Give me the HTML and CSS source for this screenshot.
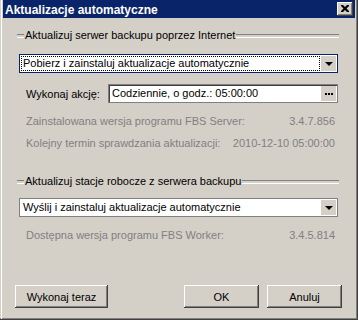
FILE: index.html
```html
<!DOCTYPE html>
<html lang="pl">
<head>
<meta charset="utf-8">
<title>Aktualizacje automatyczne</title>
<link rel="stylesheet" href="styles.css">
</head>
<body>
<div class="window">
  <div class="titlebar">
    <span class="title">Aktualizacje automatyczne</span>
    <span class="close-btn">
      <svg width="8" height="7" viewBox="0 0 8 7"><path d="M0 0h2l2 2 2-2h2v1L5.5 3.5 8 6v1H6L4 5 2 7H0V6l2.5-2.5L0 1z" fill="#000"/></svg>
    </span>
  </div>
  <div class="content">
    <div class="legend legend-first"><span class="legend-text">Aktualizuj serwer backupu poprzez Internet</span></div>
    <div class="combo combo-focus">
      <div class="combo-value"><span class="focus-rect">Pobierz i zainstaluj aktualizacje automatycznie</span></div>
      <div class="combo-btn"><span class="arrow"></span></div>
    </div>
    <div class="action-row">
      <span class="label">Wykonaj akcję:</span>
      <div class="edit">
        <span class="edit-text">Codziennie, o godz.: 05:00:00</span>
        <span class="dots-btn"><svg width="8" height="2" viewBox="0 0 8 2"><rect x="0" y="0" width="2" height="2"/><rect x="3" y="0" width="2" height="2"/><rect x="6" y="0" width="2" height="2"/></svg></span>
      </div>
    </div>
    <div class="info info-first"><span>Zainstalowana wersja programu FBS Server:</span><span>3.4.7.856</span></div>
    <div class="info"><span>Kolejny termin sprawdzania aktualizacji:</span><span>2010-12-10 05:00:00</span></div>
    <div class="legend legend-second"><span class="legend-text">Aktualizuj stacje robocze z serwera backupu</span></div>
    <div class="combo combo-plain">
      <div class="combo-value"><span class="plain-text">Wyślij i zainstaluj aktualizacje automatycznie</span></div>
      <div class="combo-btn"><span class="arrow"></span></div>
    </div>
    <div class="info info-third"><span>Dostępna wersja programu FBS Worker:</span><span>3.4.5.814</span></div>
  </div>
  <div class="buttons">
    <button class="btn btn-wide">Wykonaj teraz</button>
    <span class="spacer"></span>
    <button class="btn">OK</button>
    <button class="btn">Anuluj</button>
  </div>
</div>
</body>
</html>
```

FILE: styles.css
```css
* { box-sizing: border-box; }
html, body { margin: 0; padding: 0; background: #d4d0c8; }
body {
  font-family: "Liberation Sans", Arial, sans-serif;
  font-size: 11px;
  color: #000;
}
.window {
  width: 358px;
  height: 320px;
  background: #d4d0c8;
  padding: 0 3px;
  box-shadow: inset -1px -1px #404040, inset -2px -2px #808080, inset 2px 0 #d4d0c8, inset 1px 0 #d4d0c8;
  position: relative;
  display: flex;
  flex-direction: column;
}
.window::before {
  content: "";
  position: absolute;
  left: 1px; top: 0; bottom: 1px;
  width: 1px;
  background: #fff;
}
.titlebar {
  height: 18px;
  background: #0a246a;
  display: flex;
  align-items: flex-start;
  justify-content: space-between;
  padding: 0 2px 0 2px;
}
.title {
  color: #fff;
  font-weight: bold;
  font-size: 12px;
  line-height: 16px;
  padding-top: 2px;
}
.close-btn {
  width: 16px;
  height: 14px;
  margin-top: 2px;
  background: #d4d0c8;
  box-shadow: inset -1px -1px #404040, inset 1px 1px #fff, inset -2px -2px #808080;
  display: flex;
  align-items: center;
  justify-content: center;
  padding-bottom: 1px;
}
.content {
  padding: 0 17px 0 14px;
  display: flex;
  flex-direction: column;
}
.legend {
  display: flex;
  align-items: center;
  height: 13px;
  line-height: 13px;
  margin-right: -1px;
}
.legend::before, .legend::after {
  content: "";
  height: 2px;
  border-top: 1px solid #808080;
  border-bottom: 1px solid #fff;
}
.legend::before { width: 7px; flex: none; }
.legend::after { flex: 1; }
.legend-text { padding: 0 1px 0 1px; }
.legend-first { margin-top: 11px; }
.legend-second { margin-top: 21px; }
.combo {
  height: 19px;
  margin-left: 2px;
  background: #fff;
  display: flex;
  padding: 1px;
}
.combo-focus { border: 1px solid #0a246a; margin-top: 12px; }
.combo-plain { border: 1px solid #808080; box-shadow: inset 1px 1px #fff; margin-top: 10px; }
.combo-value {
  flex: 1;
  display: flex;
  align-items: stretch;
  padding-right: 1px;
}
.focus-rect {
  flex: 1;
  border: 1px dotted #000;
  line-height: 13px;
  padding-left: 1px;
  white-space: nowrap;
}
.plain-text {
  padding-left: 2px;
  line-height: 15px;
  white-space: nowrap;
}
.combo-btn {
  width: 15px;
  background: #d4d0c8;
  display: flex;
  align-items: center;
  justify-content: center;
}
.arrow {
  width: 0; height: 0;
  border-left: 4px solid transparent;
  border-right: 4px solid transparent;
  border-top: 4px solid #000;
  margin-top: 1px;
}
.action-row {
  display: flex;
  align-items: center;
  margin-top: 11px;
  padding-left: 9px;
  height: 19px;
}
.label { width: 82px; flex: none; }
.edit {
  flex: 1;
  height: 19px;
  background: #fff;
  border: 1px solid #808080;
  box-shadow: inset 1px 1px #404040;
  display: flex;
  padding: 1px 1px 1px 2px;
}
.edit-text { flex: 1; line-height: 15px; padding-left: 1px; white-space: nowrap; }
.dots-btn {
  width: 15px;
  background: #d4d0c8;
  display: flex;
  align-items: center;
  justify-content: center;
}
.info {
  display: flex;
  justify-content: space-between;
  height: 22px;
  line-height: 22px;
  padding: 0 3px 0 9px;
  color: #808080;
}
.info-first { margin-top: 7px; }
.info-third { margin-top: 7px; }
.buttons {
  margin-top: auto;
  margin-bottom: 12px;
  display: flex;
  padding: 0 13px 0 12px;
  gap: 8px;
}
.spacer { flex: 1; }
.btn {
  font-family: "Liberation Sans", Arial, sans-serif;
  font-size: 11px;
  color: #000;
  background: #d4d0c8;
  border: none;
  width: 75px;
  height: 23px;
  padding: 0;
  box-shadow: inset -1px -1px #404040, inset 1px 1px #fff, inset -2px -2px #808080;
}
.btn-wide { width: 93px; }
```
